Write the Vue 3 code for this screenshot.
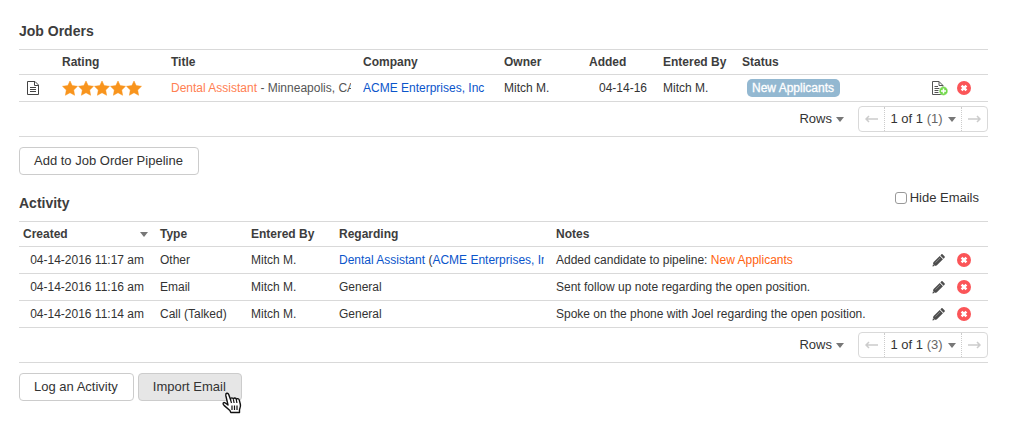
<script setup>
import { ref } from 'vue'

const hideEmails = ref(false)
const jobs = [
  { title: 'Dental Assistant', place: 'Minneapolis, CA', company: 'ACME Enterprises, Inc', owner: 'Mitch M.', added: '04-14-16', by: 'Mitch M.', status: 'New Applicants' },
]
const activities = [
  { created: '04-14-2016 11:17 am', type: 'Other', by: 'Mitch M.', job: 'Dental Assistant', company: 'ACME Enterprises, Inc', notes: 'Added candidate to pipeline: ', status: 'New Applicants' },
  { created: '04-14-2016 11:16 am', type: 'Email', by: 'Mitch M.', notes: 'Sent follow up note regarding the open position.' },
  { created: '04-14-2016 11:14 am', type: 'Call (Talked)', by: 'Mitch M.', notes: 'Spoke on the phone with Joel regarding the open position.' },
]
</script>

<template>
  <main class="page">
    <svg class="defs" aria-hidden="true">
      <symbol id="remove" viewBox="0 0 14 14">
        <circle cx="7" cy="7" r="7" fill="#fb5558" />
        <path d="M4.6 4.6l4.8 4.8M9.4 4.6L4.6 9.4" stroke="#fff" stroke-width="2.5" />
      </symbol>
      <symbol id="pencil" viewBox="0 0 14 14">
        <path d="M.5 13.500l1-4.500 6.800-6.800 3.500 3.500L5 12.500zM9 1.500l1-1c.5-.5 1-.5 1.500 0l2 2c.5.500.5 1 0 1.500l-1 1z" fill="#4d4d4d" />
        <path d="M3.800 9.300l5-5" stroke="#aaa" stroke-width=".7" />
        <path d="M1.600 11.300l1.200 1.200" stroke="#fff" stroke-width=".8" />
      </symbol>
      <symbol id="left" viewBox="0 0 13 8">
        <path d="M1 4h12M4 1L1 4l3 3" fill="none" stroke="#ccc" stroke-width="1.5" />
      </symbol>
      <symbol id="right" viewBox="0 0 13 8">
        <path d="M0 4h12M9 1l3 3-3 3" fill="none" stroke="#ccc" stroke-width="1.5" />
      </symbol>
    </svg>

    <section>
      <header class="head"><h2>Job Orders</h2></header>
      <table>
        <colgroup>
          <col class="w-icon"><col class="w-rating"><col class="w-title"><col class="w-company"><col class="w-owner"><col class="w-added"><col class="w-by"><col><col class="w-actions">
        </colgroup>
        <thead>
          <tr><th></th><th>Rating</th><th>Title</th><th>Company</th><th>Owner</th><th>Added</th><th>Entered By</th><th>Status</th><th></th></tr>
        </thead>
        <tbody>
          <tr v-for="job in jobs" :key="job.title">
            <td>
              <button class="icon doc" aria-label="Details">
                <svg width="12" height="14" viewBox="0 0 12 14" fill="none" stroke="#444"><path d="M.5.5h7.500l3.500 3.500v9.500H.5zM7.500.5v4h4M3 6.500h6M3 8.500h6M3 10.500h6" /></svg>
              </button>
            </td>
            <td>
              <svg class="stars" width="79" height="15" viewBox="-1 0 79 15" role="img" aria-label="5 of 5 stars">
                <path v-for="n in 5" :key="n" :transform="`translate(${(n - 1) * 16})`" d="M7 0l2.200 4.600 5.300.7-3.800 3.700.9 5.300L7 11.700l-4.600 2.600.9-5.300L-.5 5.300l5.300-.7z" fill="#f8941d" stroke="#f8941d" stroke-width=".5" />
              </svg>
            </td>
            <td><div class="clip muted"><a href="#" class="coral">{{ job.title }}</a> - {{ job.place }}</div></td>
            <td><div class="clip"><a href="#">{{ job.company }}</a></div></td>
            <td>{{ job.owner }}</td>
            <td class="date">{{ job.added }}</td>
            <td>{{ job.by }}</td>
            <td class="status"><span class="badge">{{ job.status }}</span></td>
            <td>
              <div class="actions">
                <button class="icon" aria-label="Add note">
                  <svg width="16" height="15" viewBox="0 0 16 15">
                    <path d="M.5.5h6.500l4 4v9H.5zM7 .5v4h4M2.500 5.500h3.500M2.500 7.500h5M2.500 9.500h4M2.500 11.500h4" fill="#fff" stroke="#555" />
                    <circle cx="11.500" cy="10" r="4.400" fill="#72d84b" stroke="#fff" stroke-width=".4" />
                    <path d="M11.500 7.500v5M9 10h5" stroke="#fff" stroke-width="1.500" />
                  </svg>
                </button>
                <button class="icon" aria-label="Remove"><svg width="14" height="14"><use href="#remove" /></svg></button>
              </div>
            </td>
          </tr>
        </tbody>
      </table>
      <div class="foot">
        <button class="rows">Rows <i class="caret"></i></button>
        <nav class="pager" aria-label="Job order pages">
          <button aria-label="Previous page"><svg width="13" height="8"><use href="#left" /></svg></button>
          <button class="current">1 of 1 <span class="count">(1)</span><i class="caret"></i></button>
          <button aria-label="Next page"><svg width="13" height="8"><use href="#right" /></svg></button>
        </nav>
      </div>
      <div class="buttons"><button class="btn">Add to Job Order Pipeline</button></div>
    </section>

    <section class="activity">
      <header class="head">
        <h2>Activity</h2>
        <label class="hide"><input v-model="hideEmails" type="checkbox">Hide Emails</label>
      </header>
      <table>
        <colgroup>
          <col class="w-created"><col class="w-type"><col class="w-entered"><col class="w-regarding"><col><col class="w-actions">
        </colgroup>
        <thead>
          <tr><th><div class="sort">Created<i class="caret"></i></div></th><th>Type</th><th>Entered By</th><th>Regarding</th><th>Notes</th><th></th></tr>
        </thead>
        <tbody>
          <tr v-for="row in activities" :key="row.created">
            <td class="date">{{ row.created }}</td>
            <td>{{ row.type }}</td>
            <td>{{ row.by }}</td>
            <td>
              <div v-if="row.job" class="clip"><a href="#">{{ row.job }}</a> (<a href="#">{{ row.company }}</a>)</div>
              <template v-else>General</template>
            </td>
            <td>{{ row.notes }}<a v-if="row.status" href="#" class="orange">{{ row.status }}</a></td>
            <td>
              <div class="actions">
                <button class="icon" aria-label="Edit"><svg width="13" height="13"><use href="#pencil" /></svg></button>
                <button class="icon" aria-label="Remove"><svg width="14" height="14"><use href="#remove" /></svg></button>
              </div>
            </td>
          </tr>
        </tbody>
      </table>
      <div class="foot">
        <button class="rows">Rows <i class="caret"></i></button>
        <nav class="pager" aria-label="Activity pages">
          <button aria-label="Previous page"><svg width="13" height="8"><use href="#left" /></svg></button>
          <button class="current">1 of 1 <span class="count">(3)</span><i class="caret"></i></button>
          <button aria-label="Next page"><svg width="13" height="8"><use href="#right" /></svg></button>
        </nav>
      </div>
      <div class="buttons">
        <button class="btn">Log an Activity</button>
        <div class="pointed">
          <button class="btn active">Import Email</button>
          <svg class="hand" width="20" height="22" viewBox="0 0 20 22" aria-hidden="true">
            <path d="M6 13L3.800 3.500C3.300 1 5.900.3 6.700 2.600L8.500 7.500c0-2 2.300-2.200 2.900-.4.300-1.500 2.500-1.400 3 .4.500-1.400 2.500-1 2.900.6l1.100 4.400c.5 2.300-.9 4-.9 5.700v2.300H8.800l-.9-2L2.300 13.600C.3 12 .9 9.800 3 10.800z" fill="#fff" stroke="#111" stroke-width="1.400" stroke-linejoin="round" />
            <path d="M8.500 7.500l1 3.500M11.400 7.500l.7 3.500M14.400 8l.5 3M10 13.500v4.500M12.500 13.500v4.500M15 13.500v4.500" fill="none" stroke="#111" stroke-width="1.200" />
          </svg>
        </div>
      </div>
    </section>
  </main>
</template>

<style>
body { margin: 0; background: #fff; }
</style>

<style scoped>
.page { padding: 21px 22px 24px 19px; font: 12px/16px "Liberation Sans", Arial, sans-serif; color: #333; }
.defs { position: absolute; width: 0; height: 0; }
svg { display: block; overflow: visible; }
button { font: inherit; color: inherit; cursor: pointer; }
a { color: #0b55cb; text-decoration: none; }
h2 { margin: 0; font-size: 14px; line-height: 20px; color: #3d3d3d; }
.head { display: flex; justify-content: space-between; padding-bottom: 8px; }
.activity { padding-top: 18px; }
.hide { display: flex; align-items: center; gap: 3px; height: 10px; margin-right: 9px; font-size: 13px; }
.hide input { appearance: none; width: 12px; height: 12px; margin: 0; border: 1px solid #999; border-radius: 3px; background: #fff; }
.hide input:checked { background: #0b55cb; }
table { width: 100%; table-layout: fixed; border-collapse: separate; border-spacing: 0; border-top: 1px solid #d9d9d9; }
th, td { box-sizing: border-box; height: 27px; padding: 0 8px 0 4px; text-align: left; white-space: nowrap; border-bottom: 1px solid #d9d9d9; }
th { height: 25px; color: #3d3d3d; }
.w-icon { width: 39px; }
.w-rating { width: 109px; }
.w-title { width: 192px; }
.w-company { width: 141px; }
.w-owner { width: 85px; }
.w-added { width: 74px; }
.w-by { width: 79px; }
.w-actions { width: 60px; }
.w-created { width: 137px; }
.w-type { width: 91px; }
.w-entered { width: 88px; }
.w-regarding { width: 217px; }
.clip { overflow: hidden; }
.muted { color: #555; }
.coral { color: #ff8052; }
.orange { color: #ff6310; }
.date { text-align: right; padding-right: 12px; }
.status { padding-left: 9px; }
.badge { display: inline-block; padding: 0 6px 0 5px; line-height: 18px; border-radius: 5px; background: #93b8d1; color: #fff; -webkit-text-stroke: 0.3px #fff; }
.icon { display: block; padding: 0; border: 0; background: none; }
.doc { margin-left: 4px; }
.actions { display: flex; align-items: center; justify-content: space-between; width: 39px; }
.sort { display: flex; justify-content: space-between; align-items: center; }
.caret { display: inline-block; border: 4px solid transparent; border-top: 5px solid #777; border-bottom: 0; }
.foot { display: flex; justify-content: flex-end; align-items: center; gap: 14px; height: 34px; border-bottom: 1px solid #d9d9d9; font-size: 13px; }
.rows { display: flex; align-items: center; gap: 4px; padding: 0; border: 0; background: none; }
.pager { display: flex; box-sizing: border-box; height: 26px; border: 1px solid #d9d9d9; border-radius: 4px; }
.pager button { display: flex; align-items: center; justify-content: center; width: 25px; padding: 0; border: 0; background: none; }
.pager .current { width: 78px; white-space: pre; border: 1px dotted #ccc; border-width: 0 1px; }
.current .caret { margin-left: 5px; }
.count { color: #666; }
.buttons { display: flex; gap: 4px; padding-top: 10px; }
.btn { display: block; box-sizing: border-box; height: 28px; padding: 0 15px 0 14px; border: 1px solid #ccc; border-radius: 4px; background: #fff; font-size: 13px; color: #333; }
.active { background: #e6e6e6; }
.pointed { position: relative; }
.hand { position: absolute; right: 0; bottom: -13px; }
</style>
